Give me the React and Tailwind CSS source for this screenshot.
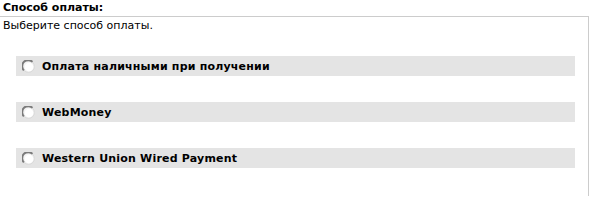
import React from 'react'

const methods = [
  'Оплата наличными при получении',
  'WebMoney',
  'Western Union Wired Payment',
]

function Radio() {
  return (
    <svg width="13" height="13" viewBox="0 0 13 13" className="shrink-0">
      <circle cx="6.5" cy="6.5" r="5.8" fill="#f4f4f4" stroke="#d8d8d8" strokeWidth="1" />
      <path d="M1.9 10.4 A5.8 5.8 0 0 1 10.4 1.9" fill="none" stroke="#7a7a7a" strokeWidth="2" />
      <circle cx="7" cy="7" r="4.3" fill="#ffffff" />
    </svg>
  )
}

function MethodRow({ label }) {
  return (
    <label className="flex h-[20px] w-[559px] items-center bg-[#e4e4e4] pl-[6px] cursor-pointer">
      <Radio />
      <span className="ml-[7px] font-bold leading-none tracking-[0.2px]">{label}</span>
    </label>
  )
}

export default function App() {
  return (
    <div className="w-[589px] bg-white font-['DejaVu_Sans',Verdana,sans-serif] text-[11px] text-black">
      <div className="h-[17px] border-b border-[#cccccc] pl-[3px] font-bold leading-[16px]">
        Способ оплаты:
      </div>
      <div className="h-[179px] border-r border-[#cccccc]">
        <p className="pl-[3px] pt-[2px] leading-[13px]">Выберите способ оплаты.</p>
        <div className="mt-[24px] flex flex-col gap-[26px] pl-[16px]">
          {methods.map(m => (
            <MethodRow key={m} label={m} />
          ))}
        </div>
      </div>
    </div>
  )
}
